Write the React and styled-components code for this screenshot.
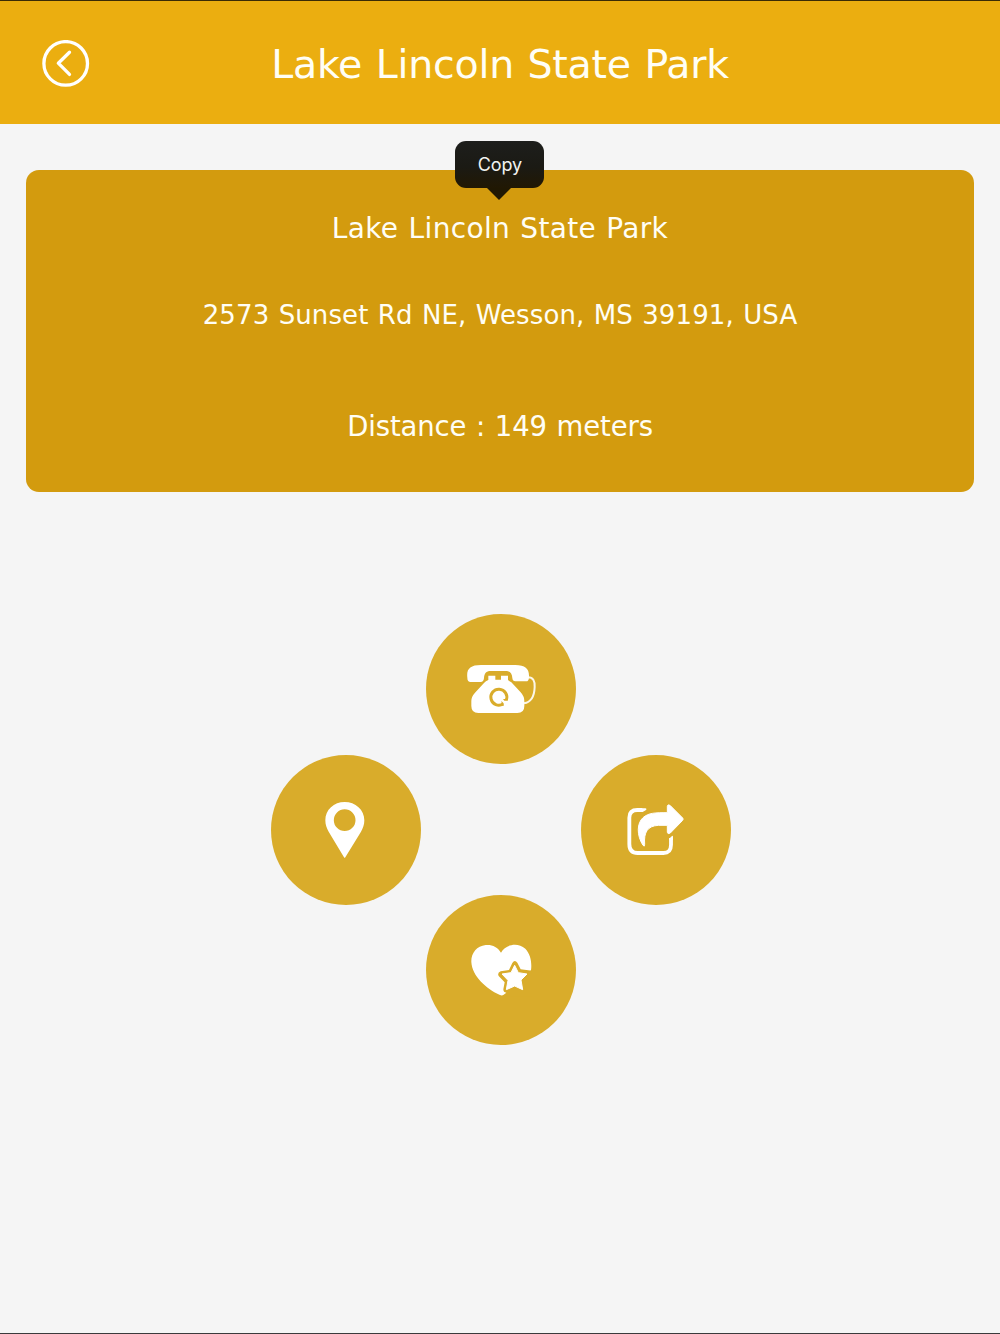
import React from 'react';
import styled, { createGlobalStyle } from 'styled-components';

const GlobalStyle = createGlobalStyle`
    * {
        box-sizing: border-box;
    }

    body {
        margin: 0;
        background-color: #f5f5f5;
    }
`

const Page = styled.div`
    height: 1334px;
    display: flex;
    flex-direction: column;
    background-color: #f5f5f5;
    border-bottom: 1px solid #3a3a3c;
    font-family: Verdana, "DejaVu Sans", sans-serif;
    color: #fffef5;
`

const Header = styled.header`
    height: 124px;
    flex-shrink: 0;
    display: grid;
    grid-template-columns: 132px 1fr 132px;
    align-items: center;
    background-color: #ebae10;
    border-top: 1px solid #3b2b04;
`

const BackButton = styled.button`
    width: 48px;
    height: 48px;
    margin: 2px 0 0 42px;
    padding: 0;
    border: none;
    background: none;

    svg {
        display: block;
    }
`

const Title = styled.h1`
    margin: 3px 0 0;
    font-size: 39.5px;
    font-weight: 400;
    line-height: 48px;
    letter-spacing: -0.25px;
    word-spacing: 1.3px;
    text-align: center;
    white-space: nowrap;
`

const Card = styled.section`
    position: relative;
    height: 322px;
    margin: 46px 26px 0;
    padding-top: 41px;
    flex-shrink: 0;
    display: flex;
    flex-direction: column;
    align-items: center;
    border-radius: 13px;
    background-color: #d39b0e;
`

const CardLine = styled.p`
    margin: 0 0 ${props => props.$gap || 0}px;
    font-size: ${props => props.$size}px;
    line-height: 36px;
    letter-spacing: ${props => props.$spacing || 0}px;
    word-spacing: 1px;
    white-space: nowrap;
`

const CopyBubble = styled.div`
    position: absolute;
    top: -29px;
    left: 429.4px;
    width: 89px;
    height: 47px;
    display: flex;
    justify-content: center;
    align-items: center;
    border-radius: 11px;
    background: linear-gradient(#1d1e1c 0%, #1b1a14 55%, #211803 100%);
    color: #f2f2f0;
    font-family: Inter, sans-serif;
    font-size: 18px;
    letter-spacing: -0.1px;

    &::after {
        content: '';
        position: absolute;
        top: 46.5px;
        left: 32px;
        border: 12.5px solid transparent;
        border-top: 12px solid #201803;
        border-bottom: none;
    }
`

const Actions = styled.nav`
    display: grid;
    grid-template-columns: repeat(3, 150px);
    grid-template-rows: 141px 140px 150px;
    column-gap: 5px;
    justify-content: center;
    margin-top: 122px;
    padding-left: 1px;
`

const ActionButton = styled.button`
    grid-column: ${props => props.$col};
    grid-row: ${props => props.$row};
    width: 150px;
    height: 150px;
    padding: 0;
    border: none;
    border-radius: 50%;
    background-color: #d9ac2b;

    svg {
        display: block;
    }
`

const BackIcon = () => (
    <svg width="48" height="48" viewBox="0 0 48 48" fill="none" stroke="#fff" strokeLinecap="round" strokeLinejoin="round">
        <circle cx="23.7" cy="23.4" r="21.8" strokeWidth="3.3" />
        <path d="M27.5 12.2 16.3 23.2 27.5 34.4" strokeWidth="3.3" />
    </svg>
)

const PhoneIcon = () => (
    <svg width="150" height="150" viewBox="-90 -108 450 450">
        <path fill="#fff" d="M34 83C31 57 42 45 75 45H178C208 45 220 57 219 80Q219 94 210 94H178Q170 94 169 84C168 70 162 63 148 63H104C90 63 85 70 84 84Q83 96 74 96H44Q34 96 34 83Z" />
        <path fill="#fff" d="M97 77H118V89H135V77H156V89Q158 93 166 97L194 127Q205 139 205 154V168Q205 189 184 189H67Q46 189 46 168V153Q46 140 57 128L84 99Q89 93 97 90Z" />
        <path fill="none" stroke="#d9ac2b" strokeWidth="9" d="M151 150A24 24 0 1 0 141 162" />
        <path fill="#d9ac2b" d="M141 147H155V152H145ZM136 153 143 160V167H138Z" />
        <path fill="none" stroke="#fff" strokeWidth="6" opacity=".9" d="M216 82C232 82 237 94 236 111C235 139 225 157 204 160" />
    </svg>
)

const PinIcon = () => (
    <svg width="150" height="150" viewBox="-116 -105 450 450">
        <path
            fill="#fff"
            fillRule="evenodd"
            d="M105 36C137 36 164 59 164 91C164 104 160 115 154 125L107 202Q105 205 103 202L57 125C51 115 47 104 47 91C47 59 73 36 105 36ZM105 58A32.5 32.5 0 1 0 105 123A32.5 32.5 0 1 0 105 58Z"
        />
    </svg>
)

const ShareIcon = () => (
    <svg width="150" height="150" viewBox="-102 -105 450 450">
        <path
            fill="none"
            stroke="#fff"
            strokeWidth="11.5"
            strokeLinejoin="round"
            d="M82 60H67Q43 60 43 83V162Q43 189 68 189H145Q168 189 168 164V144"
        />
        <path fill="#fff" d="M77 54.5H91Q97 56 92 61L83 66H77ZM162.5 146 171 138Q174 136 174 141V150H162.5Z" />
        <path
            fill="#fff"
            stroke="#fff"
            strokeWidth="3"
            strokeLinejoin="round"
            d="M157 49Q158 42 165 46L203 84Q206 87 203 91L166 129Q158 134 157 127V106H130C98 108 86 126 89 163Q89 172 84 166C64 135 66 99 84 83C101 68 121 68 157 68Z"
        />
    </svg>
)

const HeartIcon = () => (
    <svg width="150" height="150" viewBox="-90 -105 450 450">
        <path
            fill="#fff"
            d="M135 68C125 50 107 43 89 45C62 48 45 70 46 96C48 138 91 177 132 195Q138 198 143 194L151 188L225 121C228 98 224 73 208 56C184 35 148 44 135 68Z"
        />
        {/* gold gap around the star hides the lower right of the heart */}
        <path fill="#d9ac2b" d="M151 188Q142 188 142 178L146 157L128 138Q123 129 134 124L159 120L169 99Q176 87 184 98L194 118L228 122V200H151Z" />
        <path
            fill="#fff"
            stroke="#fff"
            strokeWidth="3"
            strokeLinejoin="round"
            d="M176 106 187 128 213 132 195 150 200 179 176 168 151 179 156 151 138 132 165 128Z"
        />
    </svg>
)

const App = () => {
    return (
        <>
            <GlobalStyle />
            <Page>
                <Header>
                    <BackButton aria-label="Back">
                        <BackIcon />
                    </BackButton>
                    <Title>Lake Lincoln State Park</Title>
                </Header>

                <Card>
                    <CopyBubble>Copy</CopyBubble>
                    <CardLine $size={28} $gap={50} $spacing={0.33}>Lake Lincoln State Park</CardLine>
                    <CardLine $size={26} $gap={75} $spacing={0.1}>2573 Sunset Rd NE, Wesson, MS 39191, USA</CardLine>
                    <CardLine $size={27.5} $spacing={-0.12}>Distance : 149 meters</CardLine>
                </Card>

                <Actions>
                    <ActionButton $col={2} $row={1} aria-label="Call">
                        <PhoneIcon />
                    </ActionButton>
                    <ActionButton $col={1} $row={2} aria-label="Map">
                        <PinIcon />
                    </ActionButton>
                    <ActionButton $col={3} $row={2} aria-label="Share">
                        <ShareIcon />
                    </ActionButton>
                    <ActionButton $col={2} $row={3} aria-label="Favorite">
                        <HeartIcon />
                    </ActionButton>
                </Actions>
            </Page>
        </>
    )
}

export default App
